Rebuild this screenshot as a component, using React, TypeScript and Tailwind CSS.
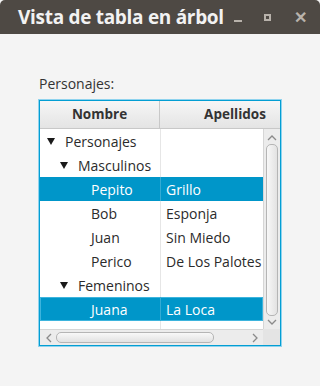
import { ReactNode } from "react";

interface Row {
  level: number;
  name: string;
  last?: string;
  expander?: boolean;
  selected?: boolean;
  focused?: boolean;
}

const ROWS: Row[] = [
  { level: 0, name: "Personajes", expander: true },
  { level: 1, name: "Masculinos", expander: true },
  { level: 2, name: "Pepito", last: "Grillo", selected: true },
  { level: 2, name: "Bob", last: "Esponja" },
  { level: 2, name: "Juan", last: "Sin Miedo" },
  { level: 2, name: "Perico", last: "De Los Palotes" },
  { level: 1, name: "Femeninos", expander: true },
  { level: 2, name: "Juana", last: "La Loca", selected: true, focused: true },
];

const FONT = { fontFamily: '"Open Sans", "Noto Sans", sans-serif' };

function Chevron({ dir }: { dir: "up" | "down" | "left" | "right" }) {
  const d = {
    up: "M1 6 L5 2 L9 6",
    down: "M1 2 L5 6 L9 2",
    left: "M6 1 L2 5 L6 9",
    right: "M2 1 L6 5 L2 9",
  }[dir];
  const vertical = dir === "up" || dir === "down";
  return (
    <svg
      width={vertical ? 10 : 8}
      height={vertical ? 8 : 10}
      viewBox={vertical ? "0 0 10 8" : "0 0 8 10"}
      className="block"
    >
      <path d={d} fill="none" stroke="#8a8a8a" strokeWidth="1.3" />
    </svg>
  );
}

function Expander() {
  return (
    <svg width="8" height="7" viewBox="0 0 8 7" className="block">
      <path d="M0 0 H8 L4 7 Z" fill="#1a1a1a" />
    </svg>
  );
}

function Cell({ children, className }: { children?: ReactNode; className?: string }) {
  return <div className={"flex items-center h-full " + (className ?? "")}>{children}</div>;
}

export default function App() {
  return (
    <div className="w-[320px] h-[386px] flex flex-col bg-[#f4f4f4] overflow-hidden" style={FONT}>
      {/* title bar */}
      <div className="h-[34px] shrink-0 bg-[#4e4944] flex items-center pl-[18px] rounded-t-[5px]">
        <span className="text-[19px] font-bold text-[#f2f2f2] tracking-[-0.3px] leading-none">
          Vista de tabla en árbol
        </span>
        <div className="flex items-center ml-auto">
          <span className="block w-[8px] h-[2px] bg-[#b8b2ab] mt-[7px] mr-[22px]" />
          <span className="block w-[7px] h-[7px] border-2 border-[#b8b2ab] mr-[23px]" />
          <span className="text-[#b8b2ab] text-[16px] font-bold leading-none mr-[13px]">✕</span>
        </div>
      </div>

      <div className="pl-[39px] pt-[41px]">
        <div className="text-[14px] text-[#333] leading-[18px]">Personajes:</div>

        {/* tree table */}
        <div className="mt-[7px] w-[242px] h-[246px] border border-[#039ed3] shadow-[0_0_0_1px_#8fd3ee] bg-white flex flex-col">
          {/* header */}
          <div className="h-[28px] shrink-0 flex border-b border-[#c8c8c8] bg-gradient-to-b from-[#f6f6f6] to-[#e4e4e4] overflow-hidden">
            <div className="w-[120px] shrink-0 border-r border-[#c8c8c8] flex items-center justify-center text-[13.5px] font-bold text-[#333]">
              Nombre
            </div>
            <div className="w-[150px] shrink-0 flex items-center justify-center text-[13.5px] font-bold text-[#333]">
              Apellidos
            </div>
          </div>

          {/* body */}
          <div className="flex h-[200px] shrink-0">
            <div className="w-[223px] shrink-0 bg-white overflow-hidden">
              {ROWS.map((r) => (
                <div
                  key={r.name}
                  className={
                    "h-[24px] flex text-[14px] " +
                    (r.selected ? "bg-[#0096c9] text-white " : "text-[#2b2b2b] ") +
                    (r.focused ? "shadow-[inset_0_0_0_1px_#3db4dd]" : "")
                  }
                >
                  <Cell className="w-[120px] shrink-0">
                    <div className="flex items-center" style={{ paddingLeft: 7 + r.level * 13 }}>
                      <span className="w-[18px] shrink-0 flex justify-start">
                        {r.expander && <Expander />}
                      </span>
                      <span>{r.name}</span>
                    </div>
                  </Cell>
                  <Cell
                    className={
                      "flex-1 pl-[5px] border-l whitespace-nowrap " +
                      (r.selected ? "border-[#33abd4]" : "border-[#e6e6e6]")
                    }
                  >
                    {r.last}
                  </Cell>
                </div>
              ))}
              <div className="h-[8px] flex">
                <div className="w-[120px]" />
                <div className="flex-1 border-l border-[#e6e6e6]" />
              </div>
            </div>
            {/* vertical scrollbar */}
            <div className="w-[17px] shrink-0 bg-[#ececec] border-l border-[#d6d6d6] flex flex-col items-center">
              <div className="h-[14px] flex items-end justify-center pb-[1px]">
                <Chevron dir="up" />
              </div>
              <div className="w-[12px] h-[172px] mt-[1px] rounded-[5px] border border-[#b5b5b5] bg-gradient-to-r from-[#f8f8f8] to-[#e2e2e2]" />
              <div className="h-[12px] flex items-center justify-center">
                <Chevron dir="down" />
              </div>
            </div>
          </div>

          {/* horizontal scrollbar */}
          <div className="flex h-[16px] shrink-0">
            <div className="w-[223px] shrink-0 bg-[#ececec] border-t border-[#d6d6d6] flex items-center">
              <div className="w-[16px] flex justify-center pl-[2px]">
                <Chevron dir="left" />
              </div>
              <div className="w-[158px] h-[11px] rounded-[5px] border border-[#b5b5b5] bg-gradient-to-b from-[#f8f8f8] to-[#e2e2e2]" />
              <div className="flex-1 flex justify-end pr-[4px]">
                <Chevron dir="right" />
              </div>
            </div>
            <div className="w-[17px] shrink-0 bg-[#e4e4e4]" />
          </div>
        </div>
      </div>
    </div>
  );
}
